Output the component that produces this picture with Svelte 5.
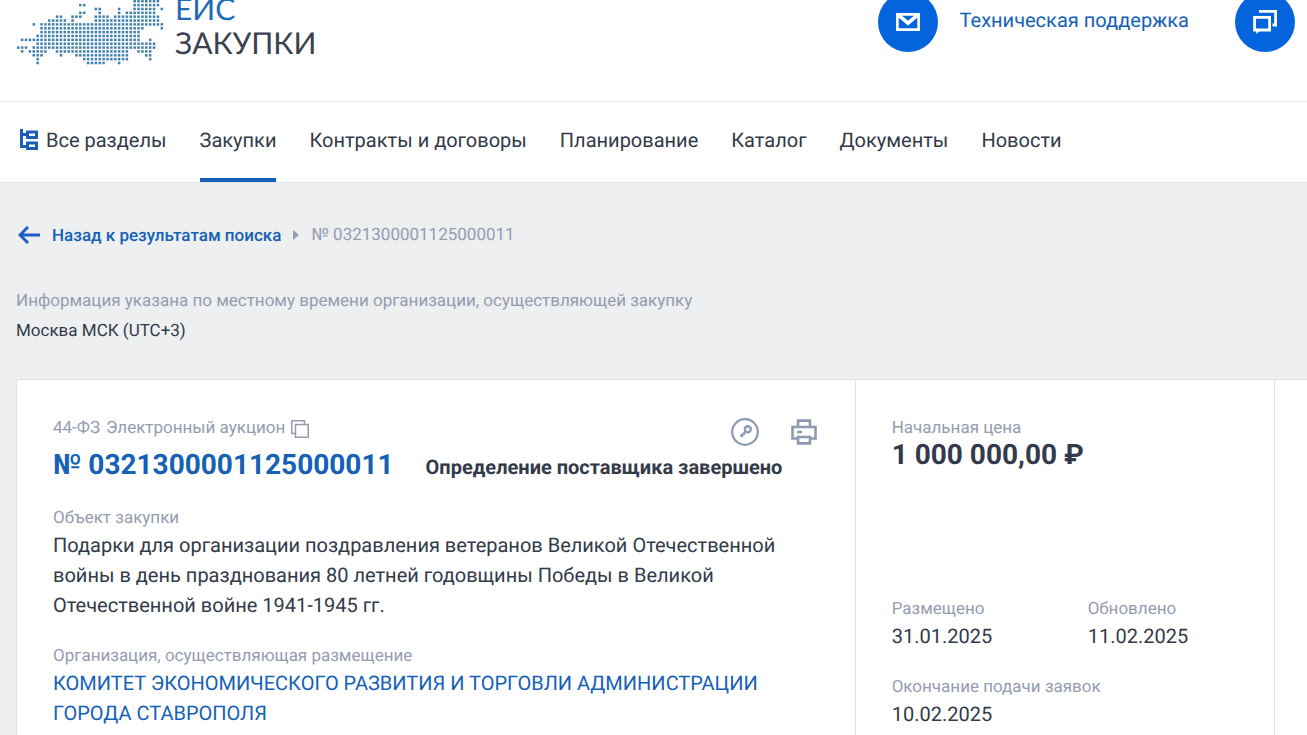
<script>
    /* logo map: runs of dots per row, [first, last] column */
    const mapRows = [
        [[30, 36]],
        [[16, 17], [30, 36]],
        [[20, 21], [26, 26], [30, 35], [37, 37]],
        [[16, 17], [21, 21], [26, 26], [28, 35]],
        [[10, 11], [14, 16], [20, 23], [25, 36]],
        [[8, 12], [14, 14], [20, 36]],
        [[4, 4], [6, 37]],
        [[6, 32], [37, 37]],
        [[6, 31]],
        [[5, 31]],
        [[1, 31], [34, 34]],
        [[5, 35]],
        [[0, 2], [4, 35]],
        [[1, 1], [3, 7], [10, 28], [31, 34]],
        [[4, 6], [11, 11], [15, 28], [33, 34]],
        [[5, 5], [17, 28], [34, 34]],
        [[5, 5], [18, 22], [26, 26]]
    ];

    const dots = mapRows.flatMap((runs, row) =>
        runs.flatMap(([from, to]) =>
            Array.from({ length: to - from + 1 }, (_, i) => ({ x: (from + i) * 3.88, y: row * 3.86 }))
        )
    );

    const sections = ['Закупки', 'Контракты и договоры', 'Планирование', 'Каталог', 'Документы', 'Новости'];
    let active = $state('Закупки');

    const number = '0321300001125000011';
</script>

<header>
    <a class="logo" href="#home">
        <svg width="148" height="65" viewBox="0 0 148 65" aria-hidden="true">
            {#each dots as dot}
                <rect x={dot.x} y={dot.y} width="2.5" height="2.5" />
            {/each}
        </svg>
        <span class="logo-text">
            <span class="logo-top">ЕИС</span>
            <span>ЗАКУПКИ</span>
        </span>
    </a>
    <div class="support">
        <a class="round" href="#mail" aria-label="Почта">
            <svg width="24" height="18" viewBox="0 0 24 18">
                <path d="M0 0H24V18H0ZM2.7 4.8V15.3H21.3V4.8L12 12.5ZM6 2.7L12 7.8L18 2.7Z" fill="#fff" fill-rule="evenodd" />
            </svg>
        </a>
        <a class="support-link" href="#support">Техническая поддержка</a>
        <a class="round chat" href="#chat" aria-label="Чат">
            <svg width="24" height="24" viewBox="0 0 24 24" fill="none" stroke="#fff" stroke-width="2.8">
                <path d="M6 1.4H22.6V15H19.5M22.6 1.4V15" />
                <path d="M1.6 7.4H16.6V20H1.6Z" />
                <path d="M3 20H8L3.5 24Z" fill="#fff" stroke="none" />
            </svg>
        </a>
    </div>
</header>

<nav>
    <a class="all" href="#all">
        <svg width="18" height="22" viewBox="0 0 18 22" fill="none" stroke="#1c5fb8" stroke-width="3">
            <path d="M1.5 0V17.5H6M1.5 5.5H6" />
            <path d="M7.5 3H16.5V8.5H7.5ZM7.5 14H16.5V19.5H7.5Z" />
        </svg>
        Все разделы
    </a>
    {#each sections as section}
        <a class="tab" class:active={section === active} href="#section" onclick={() => (active = section)}>{section}</a>
    {/each}
</nav>

<main>
    <div class="crumbs">
        <a class="back" href="#results">
            <svg width="22" height="18" viewBox="0 0 22 18" fill="none" stroke="#1c5fc8" stroke-width="3">
                <path d="M22 9H2M10 1L2 9L10 17" />
            </svg>
            <span>Назад к результатам поиска</span>
        </a>
        <svg width="6" height="10" viewBox="0 0 6 10"><path d="M0 0L6 5L0 10Z" fill="#959cb0" /></svg>
        <span class="current">№ {number}</span>
    </div>

    <div class="zone">
        <p class="label">Информация указана по местному времени организации, осуществляющей закупку</p>
        <p>Москва МСК (UTC+3)</p>
    </div>

    <div class="card">
        <section class="info">
            <div class="top">
                <div class="kind label">
                    <span>44-ФЗ</span>
                    <span>Электронный аукцион</span>
                    <button class="copy" aria-label="Копировать">
                        <svg width="18" height="18" viewBox="0 0 18 18" fill="none" stroke="#959cb0" stroke-width="1.5">
                            <path d="M4 13.5H0.8V0.8H13.5V4M4.5 4.5H17.2V17.2H4.5Z" />
                        </svg>
                    </button>
                </div>
                <div class="tools">
                    <button aria-label="Электронная подпись">
                        <svg width="28" height="28" viewBox="0 0 28 28" fill="none" stroke="#8d9ab5" stroke-width="2">
                            <circle cx="14" cy="14" r="12.8" stroke-width="2.2" />
                            <circle cx="16.8" cy="11.3" r="3" stroke-width="2.4" />
                            <path d="M14.8 13.3L9.5 18.6M9.5 16.5L12 19M12 14.6L14 16.6" />
                        </svg>
                    </button>
                    <button aria-label="Печать">
                        <svg width="26" height="26" viewBox="0 0 26 26" fill="none" stroke="#8d9ab5" stroke-width="2.6">
                            <path d="M7 7V1.6H19V7M6 19.5H1.5V8H24.5V19.5H20" />
                            <path d="M7 18H19V24.4H7ZM6 13H11" />
                        </svg>
                    </button>
                </div>
            </div>
            <div class="headline">
                <a class="number" href="#purchase">№ {number}</a>
                <strong>Определение поставщика завершено</strong>
            </div>
            <div class="field object">
                <span class="label">Объект закупки</span>
                <p>Подарки для организации поздравления ветеранов Великой Отечественной войны в день празднования 80 летней годовщины Победы в Великой Отечественной войне 1941-1945 гг.</p>
            </div>
            <div class="field">
                <span class="label">Организация, осуществляющая размещение</span>
                <a href="#organization">КОМИТЕТ ЭКОНОМИЧЕСКОГО РАЗВИТИЯ И ТОРГОВЛИ АДМИНИСТРАЦИИ ГОРОДА СТАВРОПОЛЯ</a>
            </div>
        </section>

        <section class="price">
            <div class="field">
                <span class="label">Начальная цена</span>
                <span class="sum">1 000 000,00 ₽</span>
            </div>
            <div class="dates">
                <div class="field">
                    <span class="label">Размещено</span>
                    <span>31.01.2025</span>
                </div>
                <div class="field">
                    <span class="label">Обновлено</span>
                    <span>11.02.2025</span>
                </div>
            </div>
            <div class="field">
                <span class="label">Окончание подачи заявок</span>
                <span>10.02.2025</span>
            </div>
        </section>

        <section class="rest"></section>
    </div>
</main>

<style>
    :global(body) {
        background: #edeff1;
        color: #333a49;
        font-family: Roboto, "Liberation Sans", sans-serif;
        font-size: 20px;
        line-height: 30px;
        text-rendering: geometricPrecision;
        overflow: hidden;
    }

    a {
        color: #1561b5;
        text-decoration: none;
    }

    p {
        margin: 0;
    }

    button {
        display: flex;
        padding: 0;
        border: none;
        background: none;
        cursor: pointer;
    }

    svg {
        display: block;
        flex-shrink: 0;
    }

    .label {
        color: #959cb0;
        font-size: 17px;
        line-height: 24px;
    }

    /* header */
    header {
        display: flex;
        justify-content: space-between;
        align-items: flex-start;
        height: 109px;
        margin-top: -8px;
        padding: 0 12px 0 17px;
        background: #fff;
        border-bottom: 1px solid #e6e8ec;
    }

    .logo {
        display: flex;
        gap: 10px;
    }

    .logo svg {
        margin-top: 8px;
        fill: #3d7fae;
    }

    .logo-text {
        display: flex;
        flex-direction: column;
        color: #3a4150;
        font-family: Lato, "Open Sans", sans-serif;
        font-size: 30px;
        line-height: 34px;
    }

    .logo-top {
        color: #1f6bb5;
    }

    .support {
        display: flex;
        align-items: center;
        gap: 22px;
    }

    .support-link {
        padding-bottom: 4px;
    }

    .round {
        display: flex;
        align-items: center;
        justify-content: center;
        width: 60px;
        height: 60px;
        border-radius: 50%;
        background: #0464de;
    }

    .chat {
        margin-left: 24px;
    }

    /* sections */
    nav {
        display: flex;
        gap: 33px;
        height: 80px;
        padding: 0 20px;
        background: #fff;
        border-bottom: 1px solid #dfe2e7;
        white-space: nowrap;
    }

    nav a {
        display: flex;
        align-items: center;
        box-sizing: border-box;
        color: #333a49;
        border-bottom: 4px solid transparent;
    }

    nav .all {
        gap: 8px;
    }

    nav .active {
        border-color: #1561b5;
    }

    /* page */
    main {
        padding: 36px 0 0 16px;
    }

    .crumbs {
        display: flex;
        align-items: center;
        gap: 12px;
        font-size: 17px;
        padding-left: 2px;
    }

    .back {
        display: flex;
        align-items: center;
        gap: 12px;
    }

    .back span {
        padding-top: 2px;
        font-weight: 500;
    }

    .current {
        color: #959cb0;
    }

    .zone {
        padding: 35px 0 33px;
        font-size: 17px;
    }

    .zone .label {
        line-height: 30px;
    }

    .card {
        display: grid;
        grid-template-columns: 2fr 1fr 32px;
        background: #fff;
        border-top: 1px solid #dfe2e7;
        border-left: 1px solid #dfe2e7;
        border-radius: 4px 0 0 0;
    }

    .card section {
        padding: 36px 38px 36px 36px;
    }

    .card .rest {
        padding: 0;
    }

    .info,
    .price {
        border-right: 1px solid #dfe2e7;
    }

    .top {
        display: flex;
        justify-content: space-between;
        height: 32px;
    }

    .kind {
        display: flex;
        gap: 6px;
    }

    .copy {
        padding-top: 4px;
    }

    .tools {
        display: flex;
        align-items: center;
        gap: 32px;
    }

    .headline {
        display: flex;
        align-items: baseline;
        gap: 32px;
        white-space: nowrap;
    }

    .number {
        font-size: 28px;
        line-height: 34px;
        font-weight: 700;
    }

    .field {
        display: flex;
        flex-direction: column;
    }

    .object {
        padding: 24px 0;
    }

    .sum {
        font-size: 28px;
        font-weight: 700;
    }

    .dates {
        display: grid;
        grid-template-columns: 196px 1fr;
        padding: 127px 0 24px;
    }
</style>
